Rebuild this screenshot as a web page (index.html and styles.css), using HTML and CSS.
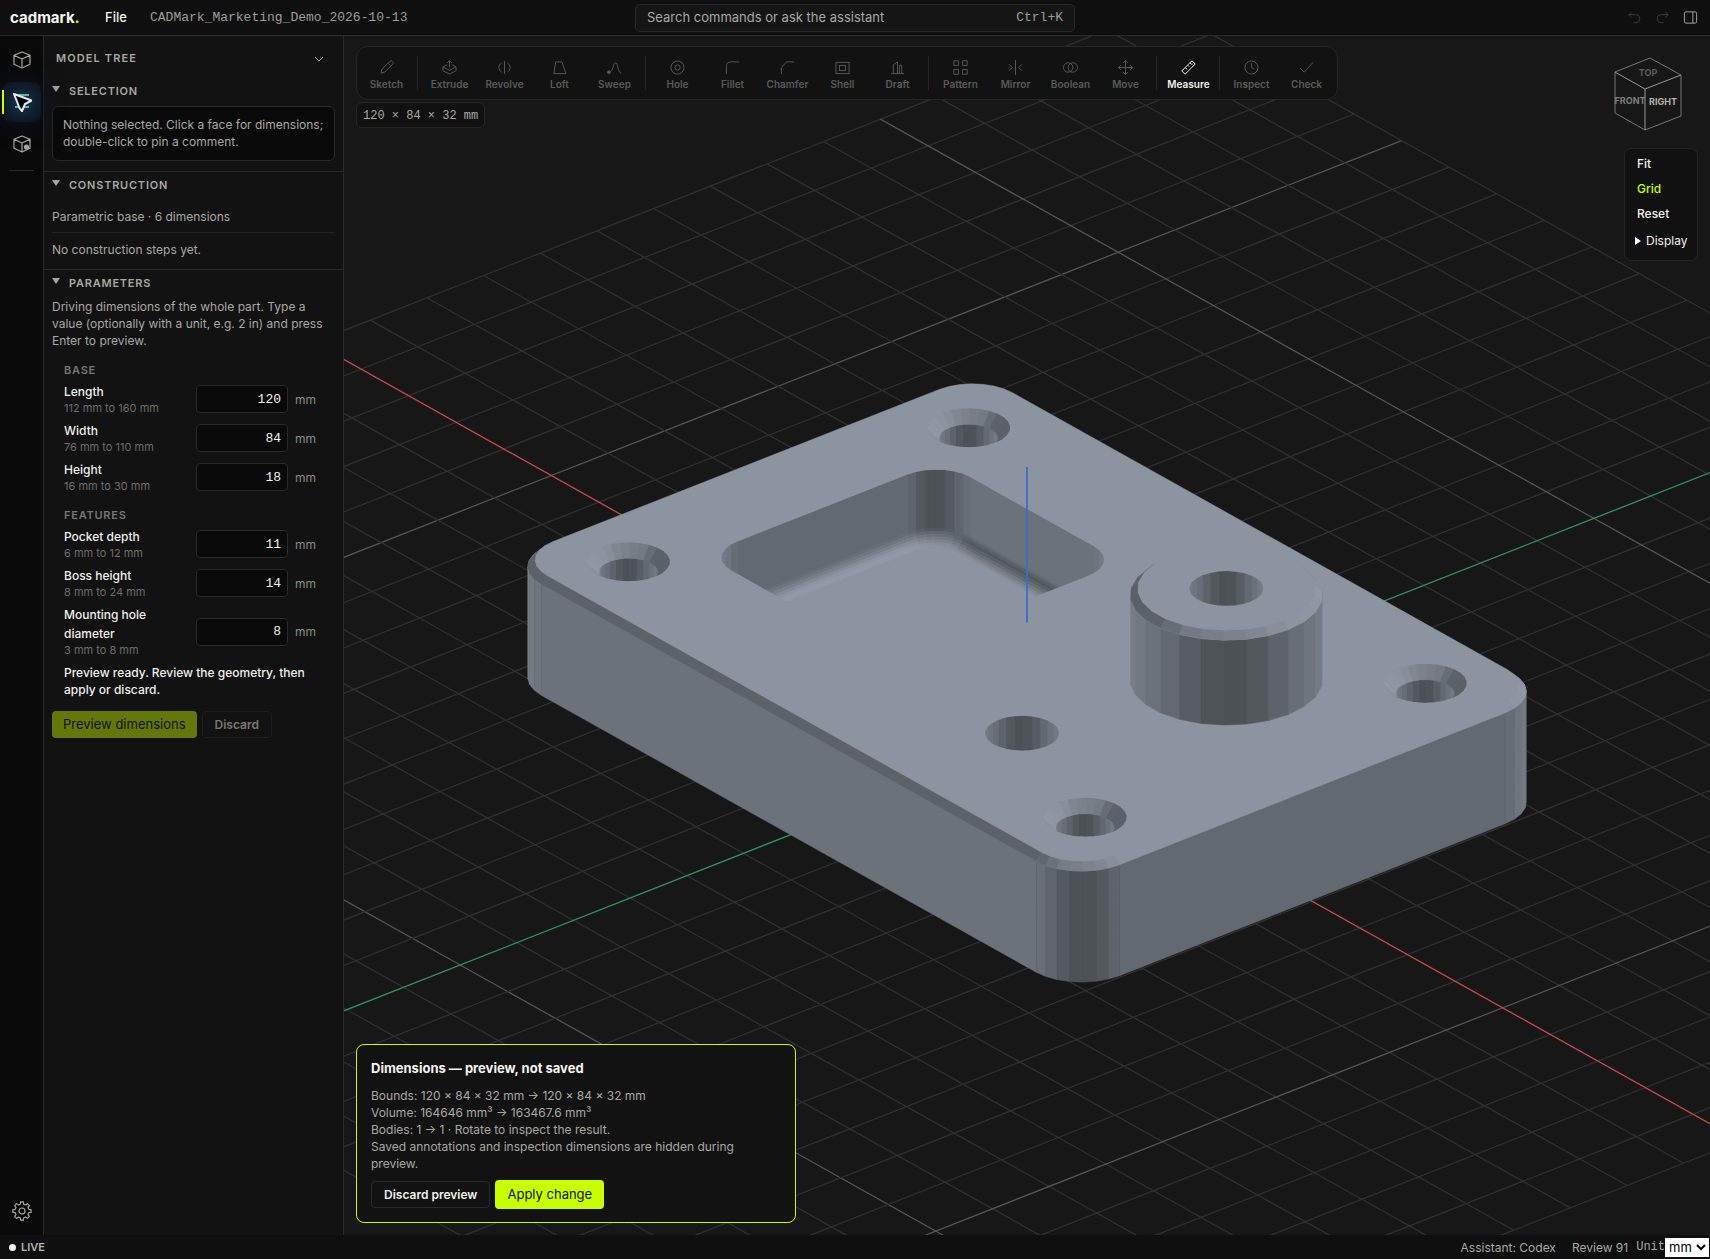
FILE: index.html
```html
<!DOCTYPE html>
<html lang="en">
<head>
<meta charset="utf-8">
<meta name="viewport" content="width=device-width, initial-scale=1">
<title>cadmark</title>
<link rel="stylesheet" href="styles.css">
</head>
<body>
<div class="app">
  <header class="topbar">
    <div class="topbar-left">
      <a class="logo" href="#">cadmark<span class="logo-dot">.</span></a>
      <button class="file-button" type="button">File</button>
      <span class="filename">CADMark_Marketing_Demo_2026-10-13</span>
    </div>
    <button class="search" type="button"><span>Search commands or ask the assistant</span><kbd>Ctrl+K</kbd></button>
    <div class="topbar-right">
      <button class="icon-button dim" type="button" aria-label="Undo"><svg class="icon" viewBox="0 0 16 16"><path d="M5 2 2 5l3 3M2 5h7.500a4 4 0 0 1 0 8.500H7"/></svg></button>
      <button class="icon-button dim" type="button" aria-label="Redo"><svg class="icon" viewBox="0 0 16 16"><path d="m11 2 3 3-3 3M14 5H6.500a4 4 0 0 0 0 8.500H9"/></svg></button>
      <button class="icon-button" type="button" aria-label="Toggle panel"><svg class="icon" viewBox="0 0 16 16"><rect x="1.500" y="2" width="13" height="12" rx="1.500"/><path d="M10.500 2v12"/></svg></button>
    </div>
  </header>

  <div class="workspace">
    <nav class="rail" aria-label="Views">
      <button class="rail-button" type="button" aria-label="Model"><svg class="rail-icon" viewBox="0 0 20 20"><path d="M10 2 18 5.300v9L10 18l-8-3.700v-9zM2 5.300 10 9l8-3.700M10 9v9"/></svg></button>
      <button class="rail-button active" type="button" aria-label="Select"><svg class="rail-icon" viewBox="0 0 20 20"><path class="teal" d="M4 3h13M3 15h14"/><path class="cursor" d="M2 2 19.500 8.500 13 12 10 19 7.500 16z"/></svg></button>
      <button class="rail-button" type="button" aria-label="Part details"><svg class="rail-icon" viewBox="0 0 20 20"><path d="M10 2 18 5.300v9L10 18l-8-3.700v-9zM2 5.300 10 9l8-3.700M10 9v9"/><circle class="solid" cx="14.500" cy="13" r="2"/></svg></button>
      <span class="rail-divider"></span>
      <button class="rail-button settings" type="button" aria-label="Settings"><svg class="rail-icon" viewBox="0 0 20 20"><path d="M8.600.9 11.400.9 11.700 3.200 13.600 4 15.400 2.600 17.400 4.600 16 6.400 16.800 8.300 19.100 8.600 19.100 11.400 16.800 11.700 16 13.600 17.400 15.400 15.400 17.400 13.600 16 11.700 16.800 11.400 19.100 8.600 19.100 8.300 16.800 6.400 16 4.600 17.400 2.600 15.400 4 13.600 3.200 11.700.9 11.400.9 8.600 3.200 8.300 4 6.400 2.600 4.600 4.600 2.600 6.400 4 8.300 3.200z"/><circle cx="10" cy="10" r="3"/></svg></button>
    </nav>

    <aside class="panel">
      <div class="panel-head"><h2>MODEL TREE</h2><svg class="chevron" viewBox="0 0 12 12"><path d="m2 4 4 4 4-4"/></svg></div>

      <section class="section selection">
        <h3 class="section-title">SELECTION</h3>
        <p class="notice">Nothing selected. Click a face for dimensions; double-click to pin a comment.</p>
      </section>

      <section class="section construction">
        <h3 class="section-title">CONSTRUCTION</h3>
        <p class="step">Parametric base · 6 dimensions</p>
        <p class="step">No construction steps yet.</p>
      </section>

      <section class="section parameters">
        <h3 class="section-title">PARAMETERS</h3>
        <p class="hint">Driving dimensions of the whole part. Type a value (optionally with a unit, e.g. 2 in) and press Enter to preview.</p>
        <form class="fields">
          <h4>BASE</h4>
          <div class="field"><label for="p-length">Length<small>112 mm to 160 mm</small></label><input id="p-length" type="text" value="120"><span>mm</span></div>
          <div class="field"><label for="p-width">Width<small>76 mm to 110 mm</small></label><input id="p-width" type="text" value="84"><span>mm</span></div>
          <div class="field"><label for="p-height">Height<small>16 mm to 30 mm</small></label><input id="p-height" type="text" value="18"><span>mm</span></div>
          <h4>FEATURES</h4>
          <div class="field"><label for="p-pocket">Pocket depth<small>6 mm to 12 mm</small></label><input id="p-pocket" type="text" value="11"><span>mm</span></div>
          <div class="field"><label for="p-boss">Boss height<small>8 mm to 24 mm</small></label><input id="p-boss" type="text" value="14"><span>mm</span></div>
          <div class="field"><label for="p-hole">Mounting hole diameter<small>3 mm to 8 mm</small></label><input id="p-hole" type="text" value="8"><span>mm</span></div>
          <p class="ready">Preview ready. Review the geometry, then apply or discard.</p>
        </form>
        <div class="actions">
          <button class="btn btn-muted" type="button">Preview dimensions</button>
          <button class="btn btn-ghost" type="button">Discard</button>
        </div>
      </section>
    </aside>

    <main class="viewport">
      <svg class="scene" id="scene" viewBox="-683 -600 1366 1200" preserveAspectRatio="xMidYMid slice" aria-label="3D model"></svg>

      <div class="overlay-left">
        <div class="toolbar" role="toolbar" aria-label="Modeling tools">
          <button class="tool" type="button"><svg class="icon" viewBox="0 0 16 16"><path d="m2 14 1-4 8.500-8.500a1.800 1.800 0 0 1 3 3L6 13zM10 3.500 12.500 6"/></svg>Sketch</button>
          <span class="sep"></span>
          <button class="tool" type="button"><svg class="icon" viewBox="0 0 16 16"><path d="M5.500 5 1 7.500 8 11l7-3.500L10.500 5M1 7.500v4L8 15l7-3.500v-4M8 8V1M5.500 3 8 .8 10.500 3"/></svg>Extrude</button>
          <button class="tool" type="button"><svg class="icon" viewBox="0 0 16 16"><path d="M8 1v14M5 3C1 5.500 1 10.500 5 13M11 3c4 2.500 4 7.500 0 10"/></svg>Revolve</button>
          <button class="tool" type="button"><svg class="icon" viewBox="0 0 16 16"><path d="M2 14.500h13L10.500 2H4z"/></svg>Loft</button>
          <button class="tool" type="button"><svg class="icon" viewBox="0 0 16 16"><path d="M2 13c5 0 4-10 7-10s2 10 6 11"/><circle class="solid" cx="2" cy="13" r="1.500"/></svg>Sweep</button>
          <span class="sep"></span>
          <button class="tool" type="button"><svg class="icon" viewBox="0 0 16 16"><circle cx="8" cy="8" r="7"/><circle cx="8" cy="8" r="2.800"/></svg>Hole</button>
          <button class="tool" type="button"><svg class="icon" viewBox="0 0 16 16"><path d="M1.500 15V7c0-3.500 1.500-5 5-5H15"/></svg>Fillet</button>
          <button class="tool" type="button"><svg class="icon" viewBox="0 0 16 16"><path d="M1.500 15V8L7 2h8"/></svg>Chamfer</button>
          <button class="tool" type="button"><svg class="icon" viewBox="0 0 16 16"><rect x="1" y="2.500" width="14" height="12"/><rect x="4.800" y="5.800" width="6.400" height="5.400"/></svg>Shell</button>
          <button class="tool" type="button"><svg class="icon" viewBox="0 0 16 16"><path d="M1 14.500h14M3.500 14.500V5L8 2v12.500M12.500 14.500V5.500H10v9"/></svg>Draft</button>
          <span class="sep"></span>
          <button class="tool" type="button"><svg class="icon" viewBox="0 0 16 16"><path d="M.8.800h5v5h-5zM10.200.800h5v5h-5zM.8 10.200h5v5h-5zM10.200 10.200h5v5h-5z"/></svg>Pattern</button>
          <button class="tool" type="button"><svg class="icon" viewBox="0 0 16 16"><path d="M8 0v16M1 4.500 4.500 8 1 11.500M15 4.500 11.500 8l3.500 3.500"/></svg>Mirror</button>
          <button class="tool" type="button"><svg class="icon" viewBox="0 0 16 16"><circle cx="5.500" cy="8" r="5"/><circle cx="10.500" cy="8" r="5"/></svg>Boolean</button>
          <button class="tool" type="button"><svg class="icon" viewBox="0 0 16 16"><path d="M8 .5v15M.5 8h15M5.500 3 8 .5 10.500 3M5.500 13 8 15.500l2.500-2.500M3 5.500.5 8 3 10.500M13 5.500 15.500 8 13 10.500"/></svg>Move</button>
          <span class="sep"></span>
          <button class="tool current" type="button"><svg class="icon" viewBox="0 0 16 16"><path d="M.8 11.700 11.700.8 15.200 4.300 4.300 15.200zM4.500 8l2 2M7 5.500l1.500 1.500M9.500 3l2 2"/></svg>Measure</button>
          <span class="sep"></span>
          <button class="tool" type="button"><svg class="icon" viewBox="0 0 16 16"><circle cx="8" cy="8" r="7"/><path d="M8 3.500V8l3 2"/></svg>Inspect</button>
          <button class="tool" type="button"><svg class="icon" viewBox="0 0 16 16"><path d="M1 8.500 5.500 13 15 2.500"/></svg>Check</button>
        </div>
        <output class="bounds">120 × 84 × 32 mm</output>

        <section class="preview" aria-label="Preview">
          <h2>Dimensions — preview, not saved</h2>
          <p>Bounds: 120 × 84 × 32 mm → 120 × 84 × 32 mm<br>Volume: 164646 mm³ → 163467.6 mm³<br>Bodies: 1 → 1 · Rotate to inspect the result.<br>Saved annotations and inspection dimensions are hidden during preview.</p>
          <div class="preview-actions">
            <button class="btn btn-outline" type="button">Discard preview</button>
            <button class="btn btn-primary" type="button">Apply change</button>
          </div>
        </section>
      </div>

      <div class="overlay-right">
        <svg class="navcube" viewBox="0 0 76 76" role="img" aria-label="View cube">
          <path d="M5 14 40 0 71 17 71 58 35 72 5 55z"/><path class="front" d="M5 14 35 31 71 17M35 31V72"/>
          <text class="face faint" x="38" y="18">TOP</text>
          <text class="face soft" x="20" y="46">FRONT</text>
          <text class="face" x="53" y="47">RIGHT</text>
        </svg>
        <div class="viewmenu">
          <button type="button">Fit</button>
          <button class="on" type="button">Grid</button>
          <button type="button">Reset</button>
          <details><summary>Display</summary></details>
        </div>
      </div>
    </main>
  </div>

  <footer class="status">
    <span class="live">LIVE</span>
    <span class="assistant">Assistant: Codex</span>
    <span class="review">Review 91</span>
    <label class="unit" for="unit">Unit</label>
    <select id="unit"><option>mm</option><option>in</option></select>
  </footer>
</div>
<script src="scene.js"></script>
</body>
</html>
```
FILE: styles.css
```css
* { box-sizing: border-box; }
html, body { height: 100%; }
body {
  margin: 0;
  background: #0f0f0f;
  color: #a8a8a2;
  font: 12px/17px Inter, "Liberation Sans", sans-serif;
}
h2, h3, h4, p { margin: 0; }
button, input, select { font: inherit; color: inherit; }
button { padding: 0; border: 0; background: none; }
svg { fill: none; stroke: currentColor; }

.app { display: flex; flex-direction: column; height: 100vh; min-height: 800px; }

/* Top bar */
.topbar {
  display: grid;
  grid-template-columns: 1fr 440px 1fr;
  align-items: center;
  height: 36px;
  border-bottom: 1px solid #2a2a2a;
  background: #0f0f0f;
}
.topbar-left { display: flex; align-items: center; padding-left: 10px; }
.logo { width: 95px; color: #f5f5f0; font-size: 15px; font-weight: 700; text-decoration: none; }
.logo-dot { color: #c8ff00; }
.file-button { width: 45px; color: #f0f0ec; font-size: 13px; font-weight: 500; text-align: left; }
.filename, kbd { color: #9c9c97; font: 13px/17px "Liberation Mono", monospace; }
.search {
  display: flex;
  align-items: center;
  justify-content: space-between;
  height: 28px;
  padding: 0 11px;
  border: 1px solid #2a2a2a;
  border-radius: 5px;
  background: #151515;
  font-size: 13px;
}
.topbar-right { display: flex; justify-content: flex-end; gap: 4px; padding-right: 8px; }
.icon-button { display: flex; align-items: center; justify-content: center; width: 24px; height: 24px; }
.dim { color: #3e3e3c; }
.icon { width: 15px; height: 15px; }

.workspace { display: flex; flex: 1; min-height: 0; }

/* Icon rail */
.rail {
  display: flex;
  flex-direction: column;
  align-items: center;
  gap: 2px;
  width: 44px;
  padding: 4px 0;
  border-right: 1px solid #2a2a2a;
  background: #090909;
}
.rail-button { position: relative; display: flex; align-items: center; justify-content: center; width: 38px; height: 40px; border-radius: 8px; }
.rail-icon { width: 20px; height: 20px; stroke-width: 1.200; stroke-linejoin: round; }
.rail-button.active { background: radial-gradient(circle, #1c3a58 0%, #10202f 50%, #0d1116 100%); box-shadow: 0 0 24px #0b1524; }
.rail-button.active::before { content: ""; position: absolute; left: -1px; top: 8px; width: 2px; height: 24px; background: #c8ff00; }
.teal { stroke: #59b8a0; stroke-width: 2; }
.cursor { fill: #000; stroke: #e6e4f0; stroke-width: 2; }
.solid { fill: currentColor; }
.rail-divider { width: 25px; height: 1px; margin-top: 4px; background: #2a2a2a; }
.settings { margin-top: auto; }

/* Model tree panel */
.panel { width: 300px; border-right: 1px solid #2a2a2a; background: #121212; overflow: hidden; }
.panel-head { display: flex; align-items: center; justify-content: space-between; height: 43px; padding: 2px 18px 0 12px; }
.panel h2, .section-title { font-size: 11px; font-weight: 600; letter-spacing: 0.07em; }
.panel h2 { letter-spacing: 0.1em; }
.chevron { width: 12px; height: 12px; }
.section { padding: 0 8px; border-bottom: 1px solid #2a2a2a; }
.section-title { display: flex; align-items: center; gap: 9px; height: 25px; }
.section-title::before { content: ""; margin-top: -6px; border: 4px solid transparent; border-top: 6px solid #a8a8a2; border-bottom: 0; }
.selection { padding-bottom: 10px; }
.selection .section-title { margin-bottom: 2px; }
.notice { padding: 9px 10px 10px; border: 1px solid #2a2a2a; border-radius: 6px; background: #090909; }
.construction { padding-bottom: 4px; }
.construction .section-title { height: 27px; }
.step { height: 33px; padding-top: 9px; }
.step + .step { padding-top: 8px; border-top: 1px solid #222; }
.parameters { border-bottom: 0; }
.parameters .section-title { height: 27px; margin-bottom: 1px; }
.fields { padding: 0 12px; }
.fields h4 { padding: 12px 0 2px; color: #767672; font-size: 11px; line-height: 14px; font-weight: 600; letter-spacing: 0.07em; }
.fields h4:first-child { padding-top: 14px; }
.field { display: grid; grid-template-columns: 125px 92px 1fr; column-gap: 7px; align-items: center; padding: 3px 0 2px; }
.field label { color: #f0f0ec; font-size: 12px; line-height: 19px; font-weight: 500; }
.field small { display: block; color: #6c6c69; font-size: 11px; line-height: 15px; font-weight: 400; }
.field input {
  width: 92px;
  height: 28px;
  padding: 0 6px;
  border: 1px solid #2a2a2a;
  border-radius: 4px;
  background: #090909;
  color: #f0f0ec;
  font: 13px "Liberation Mono", monospace;
  text-align: right;
}
.field span { color: #8a8a86; }
.ready { padding-top: 4px; color: #f0f0ec; font-weight: 500; }
.actions { display: flex; gap: 5px; padding-top: 13px; }
.btn { height: 27px; padding: 0 12px; border: 1px solid transparent; border-radius: 4px; font-size: 12px; }
.btn-muted { padding: 0 10px; background: #62780b; color: #111; font-size: 13px; }
.btn-ghost { border-color: #1e1e1e; color: #777773; font-weight: 600; }

/* Viewport */
.viewport { position: relative; display: flex; justify-content: space-between; flex: 1; min-width: 0; background: #171717; }
.scene { position: absolute; inset: 0; width: 100%; height: 100%; stroke: none; }
.overlay-left { position: relative; display: flex; flex-direction: column; align-items: flex-start; padding: 10px 0 12px 12px; }
.toolbar { display: flex; align-items: center; height: 54px; padding: 0 3px 0 2px; border: 1px solid #262626; border-radius: 12px; background: #121212; }
.tool { display: flex; flex-direction: column; align-items: center; gap: 2px; width: 55px; padding-top: 4px; color: #5a5a58; font-size: 10px; line-height: 14px; font-weight: 600; }
.tool.current { color: #f0f0ec; }
.sep { width: 1px; height: 34px; margin: 0 4px 0 3px; background: #262626; }
.bounds { margin-top: 2px; padding: 5px 6px 2px; border: 1px solid #262626; border-radius: 6px; background: #111; color: #a8a8a2; font: 12px/17px "Liberation Mono", monospace; }
.preview { width: 440px; margin-top: auto; padding: 14px 14px 13px; border: 1px solid #c8ff00; border-radius: 8px; background: #121212; }
.preview h2 { color: #f5f5f0; font-size: 13px; line-height: 19px; font-weight: 700; }
.preview p { padding: 9px 0 8px; line-height: 17px; }
.preview-actions { display: flex; align-items: center; gap: 5px; }
.btn-outline { border-color: #2a2a2a; color: #f0f0ec; font-weight: 600; }
.btn-primary { height: 29px; padding: 0 11px; background: #c8ff00; color: #111; font-size: 13px; }

.overlay-right { position: relative; display: flex; flex-direction: column; align-items: flex-end; gap: 14px; padding: 22px 12px 0 0; }
.navcube { width: 76px; height: 76px; margin-right: 12px; color: #777774; overflow: visible; }
.navcube .front { stroke: #999996; }
.face { fill: #b4b4b0; stroke: none; font-size: 9px; font-weight: 700; text-anchor: middle; }
.face.faint { fill: #5e5e5c; }
.face.soft { fill: #80807c; }
.viewmenu { width: 74px; padding: 2px 10px 6px 12px; border: 1px solid #262626; border-radius: 7px; background: #111; color: #f0f0ec; }
.viewmenu button { display: block; height: 25px; font-weight: 500; }
.viewmenu .on { color: #c8ff00; }
.viewmenu details { height: 28px; margin-left: -2px; padding-top: 6px; }
.viewmenu summary { display: flex; align-items: center; gap: 5px; white-space: nowrap; }
.viewmenu summary::before { content: ""; border: 4px solid transparent; border-left: 6px solid #fff; border-right: 0; }

/* Status bar */
.status { display: flex; align-items: center; height: 24px; padding: 0 1px 0 9px; background: #0f0f0f; }
.live { display: flex; align-items: center; gap: 5px; margin-right: auto; color: #b4b4b0; font-size: 11px; font-weight: 600; }
.live::before { content: ""; width: 7px; height: 7px; border-radius: 50%; background: #f0f0ec; }
.review { margin: 0 8px 0 16px; }
.unit { font: 12px/17px "Liberation Mono", monospace; }
.status select { height: 19px; width: 44px; border: 0; background: #fff; color: #000; font-size: 13px; }
```
FILE: scene.js
```js
// Orthographic camera: azimuth 50°, elevation 28°, looking at the centre of the part.
const SCALE = 7.4, AZ = 50 * Math.PI / 180, EL = 28 * Math.PI / 180;
const TARGET_Z = 16;
const NS = 'http://www.w3.org/2000/svg';
const svg = document.getElementById('scene');

function project(x, y, z) {
  return [
    SCALE * (x * Math.cos(AZ) + y * Math.sin(AZ)),
    SCALE * ((x * Math.sin(AZ) - y * Math.cos(AZ)) * Math.sin(EL) - (z - TARGET_Z) * Math.cos(EL)),
  ];
}
function add(name, attrs, parent) {
  const el = document.createElementNS(NS, name);
  for (const k in attrs) el.setAttribute(k, attrs[k]);
  (parent || svg).appendChild(el);
  return el;
}
const pts = list => list.map(p => p[0].toFixed(2) + ',' + p[1].toFixed(2)).join(' ');
const at = (outline, z) => outline.map(p => project(p[0], p[1], z));

function line(a, b, color, width) {
  const p = project(...a), q = project(...b);
  add('line', { x1: p[0], y1: p[1], x2: q[0], y2: q[1], stroke: color, 'stroke-width': width });
}
function face(points, color, parent) {
  add('polygon', { points: pts(points), fill: color, stroke: color, 'stroke-width': 0.5 }, parent);
}

// Shading: brightness by the angle between a surface normal and the camera.
const WALL = [[0, 76], [8, 77], [15, 81], [22, 86], [36, 98], [50, 107], [65, 114], [90, 122]];
const SLOPE = [[-180, 110], [-90, 90], [-50, 92], [-35, 104], [-22, 116], [0, 121], [20, 128], [40, 140], [60, 142], [90, 145], [180, 110]];
const TOP = 140;
function lookup(table, v) {
  for (let i = 1; i < table.length; i++) {
    if (v <= table[i][0]) {
      const [a, b] = [table[i - 1], table[i]];
      return b[0] === a[0] ? b[1] : a[1] + (b[1] - a[1]) * (v - a[0]) / (b[0] - a[0]);
    }
  }
  return table[table.length - 1][1];
}
function gray(v) {
  const k = v / TOP;
  return `rgb(${Math.round(v)},${Math.round(v + 2 + 5.5 * k)},${Math.round(v + 6 + 13 * k * k)})`;
}
function viewAngle(nx, ny) {
  let d = Math.atan2(ny, nx) * 180 / Math.PI + 40;
  if (d > 180) d -= 360;
  return d;
}

// Counter-clockwise outlines with outward normals.
function circle(cx, cy, r, n) {
  const out = [];
  for (let i = 0; i < n; i++) {
    const a = 2 * Math.PI * i / n;
    out.push([cx + r * Math.cos(a), cy + r * Math.sin(a)]);
  }
  return out;
}
function roundRect(cx, cy, w, h, r, n) {
  const out = [];
  const corners = [[w - r, h - r], [r - w, h - r], [r - w, r - h], [w - r, r - h]];
  corners.forEach(([x, y], q) => {
    for (let i = 0; i <= n; i++) {
      const a = Math.PI / 2 * (q + i / n);
      out.push([cx + x + r * Math.cos(a), cy + y + r * Math.sin(a)]);
    }
  });
  return out;
}

// A band of quads between two outlines; inward bands face the axis.
function band(lower, z0, upper, z1, inward, shade, parent) {
  const n = lower.length, lo = at(lower, z0), up = at(upper, z1);
  for (let i = 0; i < n; i++) {
    const j = (i + 1) % n;
    const quad = [lo[i], lo[j], up[j], up[i]];
    let area = 0;
    quad.forEach((p, k) => { const q = quad[(k + 1) % 4]; area += p[0] * q[1] - q[0] * p[1]; });
    if (inward ? area <= 0 : area >= 0) continue;
    const s = inward ? -1 : 1;
    const dx = upper[j][0] - upper[i][0], dy = upper[j][1] - upper[i][1];
    face(quad, gray(shade(viewAngle(s * dy, -s * dx))), parent);
  }
}
const wall = d => lookup(WALL, Math.abs(d - 2));
const slope = d => lookup(SLOPE, d);

let clipId = 0;
function clipTo(outline, z) {
  const id = 'clip' + clipId++;
  add('polygon', { points: pts(at(outline, z)) }, add('clipPath', { id }));
  return add('g', { 'clip-path': `url(#${id})` });
}

// Grid and axes, just under the part
const GRID_Z = -0.25, EXTENT = 150;
for (let i = -EXTENT; i <= EXTENT; i += 10) {
  if (i === 0) continue;
  const color = i % 100 === 0 ? '#565656' : '#313131';
  line([i, -EXTENT, GRID_Z], [i, EXTENT, GRID_Z], color, 1.25);
  line([-EXTENT, i, GRID_Z], [EXTENT, i, GRID_Z], color, 1.25);
}
line([-EXTENT, 0, GRID_Z], [EXTENT, 0, GRID_Z], '#c9484f', 1.3);
line([0, -EXTENT, GRID_Z], [0, EXTENT, GRID_Z], '#2f9464', 1.3);

// Base plate
const base = roundRect(0, 0, 60, 42, 8, 7);
const baseTop = roundRect(0, 0, 59, 41, 7, 7);
band(base, 0, base, 17, false, wall);
face(at(base, 17), gray(TOP));
band(base, 17, baseTop, 18, false, slope);
face(at(baseTop, 18), gray(TOP));

// Pocket with a filleted floor
const pocket = roundRect(-24, 0, 19, 21, 6, 7);
const pocketGroup = clipTo(pocket, 18);
band(pocket, 9, pocket, 18, true, wall, pocketGroup);
const STEPS = 8, FILLET = 2;
const ring = t => {
  const d = FILLET * (1 - Math.cos(t * Math.PI / 2));
  return [roundRect(-24, 0, 19 - d, 21 - d, 6 - d, 7), 7 + FILLET * (1 - Math.sin(t * Math.PI / 2))];
};
for (let i = 0; i < STEPS; i++) {
  const [upper, zu] = ring(i / STEPS), [lower, zl] = ring((i + 1) / STEPS);
  const t = (i + 0.5) / STEPS;
  band(lower, zl, upper, zu, true, d => {
    const lit = (slope(d) - 92) / 48;
    return lookup([[0, wall(d)], [0.3, 82 + 38 * lit], [0.5, 95 + 44 * lit], [0.75, 122 + 27 * lit], [1, TOP]], t);
  }, pocketGroup);
}
face(at(ring(1)[0], 7), gray(TOP), pocketGroup);

// Through holes
function bore(cx, cy, r, z, depth, parent) {
  const c = circle(cx, cy, r, 26);
  const g = parent || clipTo(c, z);
  band(c, z - depth, c, z, true, wall, g);
}
[[-48, 30], [-48, -30], [48, 30], [48, -30]].forEach(([x, y]) => {
  const outer = circle(x, y, 5.6, 26), inner = circle(x, y, 4, 26);
  const g = clipTo(outer, 18);
  bore(x, y, 4, 16.4, 10, g);
  band(inner, 16.4, outer, 18, true, slope, g);
});
bore(24, -21, 5, 18, 18);

// Boss
const boss = circle(30, 10, 13, 26), bossTop = circle(30, 10, 12, 26);
band(boss, 18, boss, 31, false, wall);
face(at(boss, 31), gray(TOP));
band(boss, 31, bossTop, 32, false, slope);
face(at(bossTop, 32), gray(TOP));
bore(30, 10, 5, 32, 32);

// Vertical axis
line([0, 0, 18], [0, 0, 41.8], '#3b6bd0', 1.8);
```
